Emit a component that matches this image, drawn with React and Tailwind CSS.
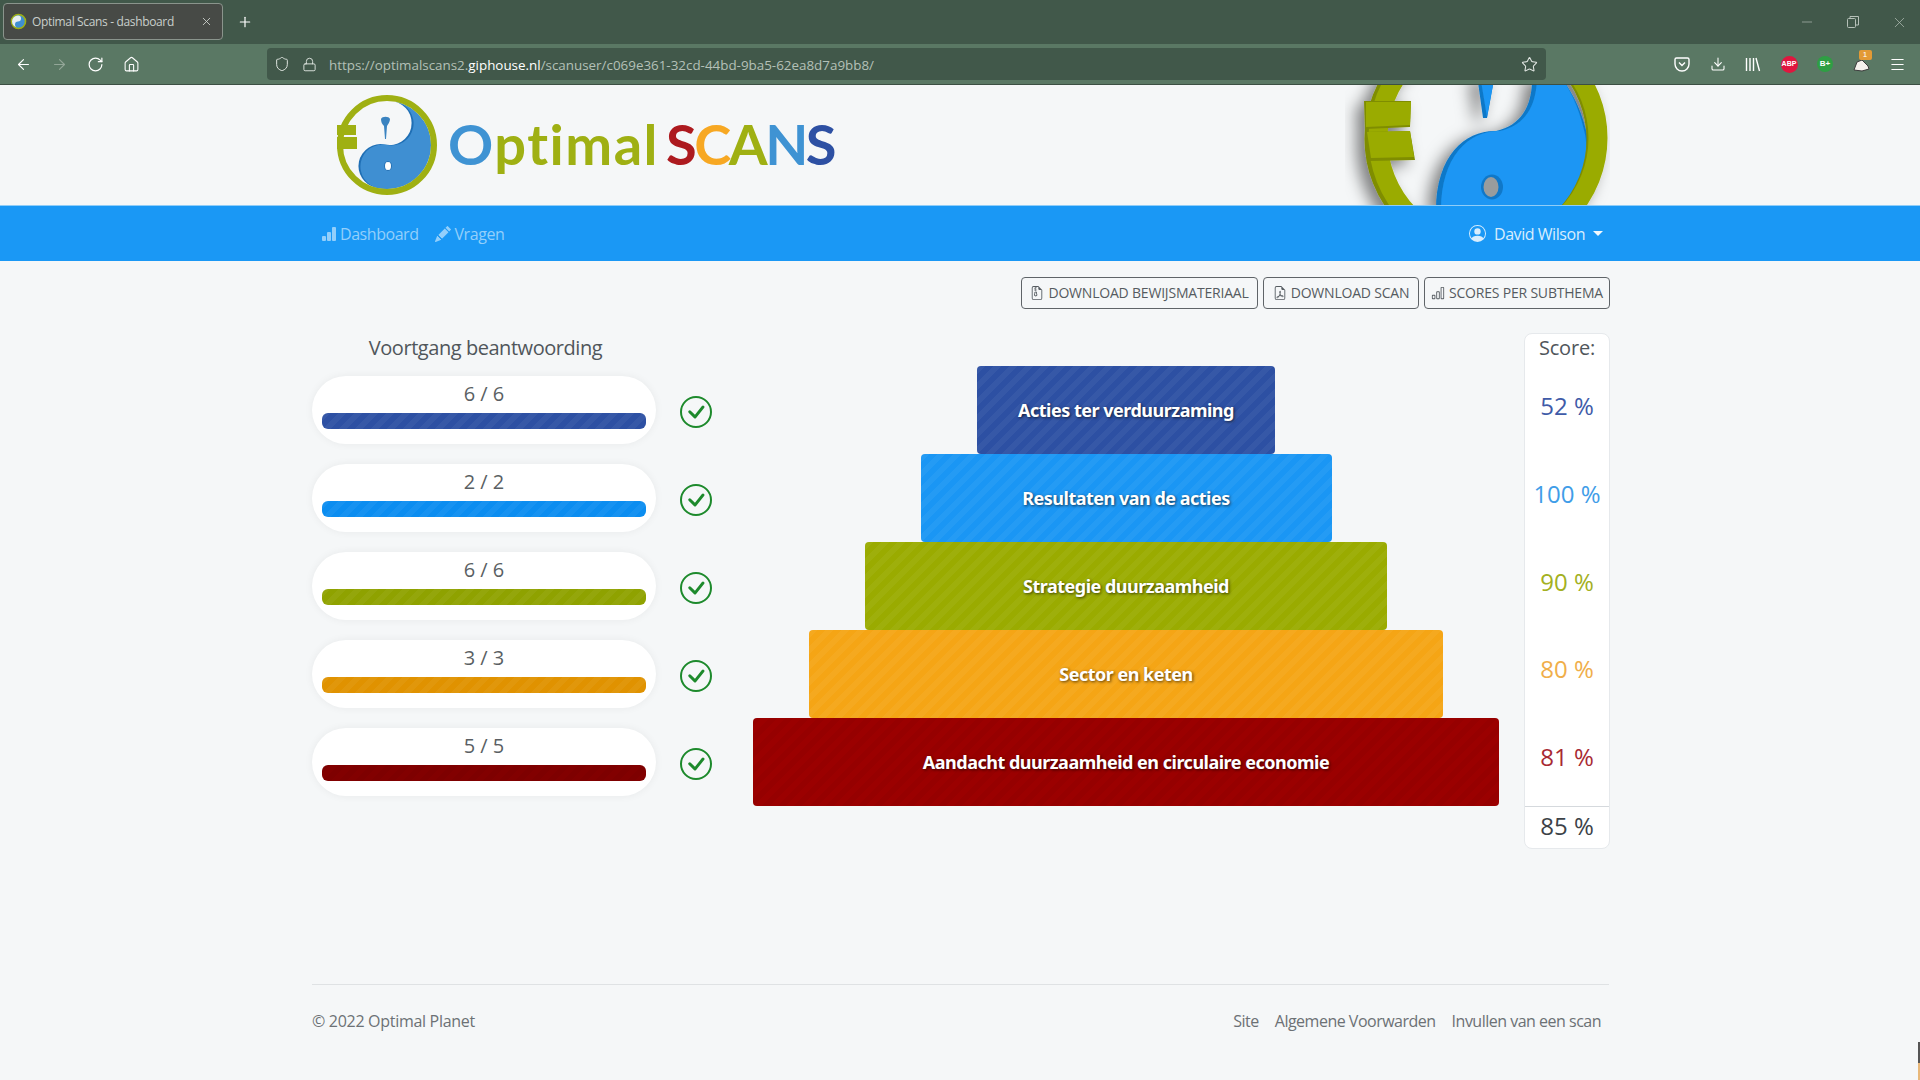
import React from "react";
import { ArrowLeft, ArrowRight, RotateCw, Home, Shield, Lock, Star, Download, Menu, X, Minus, Plus } from "lucide-react";
import { BsBarChartFill, BsPencilFill, BsPersonCircle, BsFileEarmarkZip, BsFileEarmarkPdf, BsBarChart, BsCheckCircle } from "react-icons/bs";

const stripe = "bg-[linear-gradient(135deg,rgba(255,255,255,0.045)_25%,transparent_25%,transparent_50%,rgba(255,255,255,0.045)_50%,rgba(255,255,255,0.045)_75%,transparent_75%,transparent)] bg-[length:16px_16px]";
const faint = "bg-[linear-gradient(135deg,rgba(0,0,0,0.03)_25%,transparent_25%,transparent_50%,rgba(0,0,0,0.03)_50%,rgba(0,0,0,0.03)_75%,transparent_75%,transparent)] bg-[length:16px_16px]";

const rows = [
  { count: "6 / 6", bar: "bg-[#2d50a3] " + stripe, block: "bg-[#2d50a3] w-[298px] " + stripe, label: "Acties ter verduurzaming", score: "52 %", text: "text-[#3f5ba8]" },
  { count: "2 / 2", bar: "bg-[#0b8df0] " + stripe, block: "bg-[#1a96f4] w-[411px] " + stripe, label: "Resultaten van de acties", score: "100 %", text: "text-[#3f9de8]" },
  { count: "6 / 6", bar: "bg-[#8fa200] " + stripe, block: "bg-[#9aab00] w-[522px] " + stripe, label: "Strategie duurzaamheid", score: "90 %", text: "text-[#a3b022]" },
  { count: "3 / 3", bar: "bg-[#e09200] " + stripe, block: "bg-[#f5a515] w-[634px] " + stripe, label: "Sector en keten", score: "80 %", text: "text-[#f0ae4a]" },
  { count: "5 / 5", bar: "bg-[#820000] " + faint, block: "bg-[#9b0000] w-[746px] " + faint, label: "Aandacht duurzaamheid en circulaire economie", score: "81 %", text: "text-[#a82a33]" },
];

function SmallLogo() {
  return (
    <svg width="106" height="104" viewBox="0 0 106 104" className="shrink-0">
      <g transform="translate(53 52)">
        <g transform="rotate(12)">
          <path d="M0 -44 A44 44 0 0 1 0 44 A22 22 0 0 1 0 0 A22 22 0 0 0 0 -44 Z" fill="#1f6fb5" transform="translate(-2 0)" />
          <path d="M0 -44 A44 44 0 0 1 0 44 A22 22 0 0 1 0 0 A22 22 0 0 0 0 -44 Z" fill="#3f8fd2" />
        </g>
        <ellipse cx="1" cy="21" rx="3.5" ry="4.5" fill="#fff" stroke="#1f6fb5" strokeWidth="1" />
        <path d="M-6 -26 C-5 -29 2 -29 3 -26 C3 -23 1 -21 0 -19 L-1 -6 L-2 -6 L-3 -19 C-5 -21 -6 -23 -6 -26 Z" fill="#3a83c0" />
        <circle cx="0" cy="0" r="47" fill="none" stroke="#9fb013" strokeWidth="6" />
        <rect x="-50" y="-20" width="19" height="10" fill="#9fb013" />
        <rect x="-50" y="-8" width="20" height="12" fill="#9fb013" />
      </g>
    </svg>
  );
}

function BigLogo() {
  return (
    <svg width="265" height="120" viewBox="1345 85 265 120" className="shrink-0">
      <defs>
        <filter id="sh" x="-20%" y="-20%" width="140%" height="140%">
          <feDropShadow dx="-8" dy="5" stdDeviation="8" floodColor="#000" floodOpacity="0.5" />
        </filter>
      </defs>
      <g filter="url(#sh)">
        <path d="M1532 75 C1533 105 1522 125 1496 131 C1466 130 1436 155 1436 210 L1574 210 C1586 185 1592 150 1586 130 C1580 105 1570 90 1560 75 Z" fill="#1078c8" />
        <path d="M1537 75 C1537 105 1526 125 1500 131 C1470 130 1441 155 1441 210 L1572 210 C1584 185 1590 150 1584 130 C1578 105 1570 90 1560 75 Z" fill="#1a96f4" />
        <path d="M1477 75 L1495 75 L1493 85 L1487 118 L1483 118 Z" fill="#1078c8" />
        <path d="M1480 75 L1495 75 L1493 85 L1487 117 Z" fill="#1a96f4" />
        <circle cx="1485" cy="139" r="111" fill="none" stroke="#7f8d00" strokeWidth="19" />
        <circle cx="1488" cy="138" r="110" fill="none" stroke="#9aab00" strokeWidth="19" />
        <path d="M1364 101 L1411 101 L1410 127 L1365 129 Z" fill="#7f8d00" />
        <path d="M1366 102 L1411 102 L1410 125 L1366 127 Z" fill="#9aab00" />
        <path d="M1365 132 L1410 131 L1415 160 L1370 161 Z" fill="#7f8d00" />
        <path d="M1367 132 L1410 131 L1414 157 L1371 158 Z" fill="#9aab00" />
      </g>
      <ellipse cx="1492" cy="187" rx="11" ry="12.5" fill="#1078c8" />
      <ellipse cx="1491" cy="187" rx="7.5" ry="10" fill="#999c9d" />
    </svg>
  );
}

function TabBar() {
  return (
    <div className="h-[44px] bg-[#41584a] flex items-center pl-[3px] text-white">
      <div className="w-[220px] h-[37px] mt-[-2px] rounded-[4px] border border-[#8a948c] bg-[#474a46] flex items-center pl-[6px] pr-[9px]">
        <svg width="17" height="17" viewBox="0 0 17 17" className="shrink-0">
          <circle cx="8.5" cy="8.5" r="7" fill="#3f8fd2" stroke="#9fb013" strokeWidth="1.6" />
          <path d="M8 2.5 A3 3 0 0 1 8 8.5 A3 3 0 0 0 8 14.5 A6 6 0 0 1 8 2.5 Z" fill="#e8eef0" />
        </svg>
        <span className="ml-[5px] pt-[2px] flex-1 text-[12px] text-[#c9cfcb] tracking-[-0.35px] whitespace-nowrap">Optimal Scans - dashboard</span>
        <X size={13} strokeWidth={1.5} className="text-[#d8dcd8]" />
      </div>
      <Plus size={16} strokeWidth={1.8} className="ml-[14px]" />
      <div className="flex-1" />
      <div className="flex items-center gap-[31px] pr-[12px] text-[#b5c0b8]">
        <Minus size={16} strokeWidth={1} />
        <svg width="14" height="14" viewBox="0 0 14 14" fill="none" stroke="currentColor"><rect x="1.5" y="3.5" width="8" height="9" rx="1" /><path d="M4 3V1.5h8.5V10H10" /></svg>
        <X size={17} strokeWidth={1} />
      </div>
    </div>
  );
}

function Toolbar() {
  return (
    <div className="h-[41px] bg-[#5a7864] border-b border-[#3c4f43] flex items-center text-white">
      <div className="w-[267px] flex items-center pl-[15px] pt-[1px] gap-[19px] shrink-0">
        <ArrowLeft size={17} strokeWidth={1.6} />
        <ArrowRight size={17} strokeWidth={1.6} className="text-[#93a698]" />
        <RotateCw size={17} strokeWidth={1.7} />
        <Home size={17} strokeWidth={1.5} />
      </div>
      <div className="w-[1279px] h-[32px] rounded-[4px] bg-[#41584a] flex items-center pl-[7px] pr-[8px] shrink-0">
        <Shield size={16} strokeWidth={1.5} className="text-[#dfe5e0]" />
        <Lock size={15} strokeWidth={1.5} className="ml-[12px] text-[#dfe5e0]" />
        <span className="ml-[12px] pt-[2px] flex-1 text-[13.4px] text-[#b4c0b7] whitespace-nowrap">https://optimalscans2.<span className="text-white">giphouse.nl</span>/scanuser/c069e361-32cd-44bd-9ba5-62ea8d7a9bb8/</span>
        <Star size={17} strokeWidth={1.5} className="text-[#e3e8e4]" />
      </div>
      <div className="flex-1 flex items-center justify-between pl-[128px] pr-[14px]">
        <svg width="16" height="15" viewBox="0 0 16 15" fill="none" stroke="#fff" strokeWidth="1.4"><path d="M1 2.5A1.5 1.5 0 0 1 2.5 1h11A1.5 1.5 0 0 1 15 2.5V7a7 7 0 0 1-14 0Z" /><path d="M5 5.5l3 3 3-3" /></svg>
        <Download size={16} strokeWidth={1.6} />
        <svg width="16" height="15" viewBox="0 0 16 15" fill="none" stroke="#fff" strokeWidth="1.4"><path d="M1.5 1v13M5 1v13M8.5 1v13M11 1l3.5 13" /></svg>
        <span className="w-[17px] h-[17px] rounded-full bg-[#e0163f] flex items-center justify-center text-[7px] font-bold text-white font-['Liberation_Sans',sans-serif]">ABP</span>
        <span className="w-[16px] h-[16px] rounded-full bg-[#2f9e44] flex items-center justify-center text-[8px] font-bold text-white font-['Liberation_Sans',sans-serif]">B+</span>
        <span className="relative w-[17px] h-[16px]">
          <svg width="17" height="16" viewBox="0 0 17 16"><path d="M1 14 L4 6 L9 4 L15 10 L16 13 L9 15Z" fill="#f4f1ec" stroke="#3b3b3b" /></svg>
          <span className="absolute right-[-2px] top-[-6px] w-[13px] h-[10px] rounded-[2px] bg-[#e39a35] text-[8px] leading-[10px] text-center text-white font-['Liberation_Sans',sans-serif]">1</span>
        </span>
        <Menu size={17} strokeWidth={1.5} />
      </div>
    </div>
  );
}

function Header() {
  return (
    <div className="h-[120px] overflow-hidden">
      <div className="w-[1320px] mx-auto pl-[34px] pr-[10px] h-full flex items-center justify-between">
        <div className="flex items-center h-full">
          <SmallLogo />
          <span className="ml-[8px] mt-[-2px] text-[56px] leading-none font-bold whitespace-nowrap font-['Lato',sans-serif]">
            <span className="text-[#3f93d3] tracking-[1.5px]">O</span><span className="text-[#9fb013] tracking-[1.5px]">ptimal</span>
            <span className="text-[#ad1a1f] ml-[7px] tracking-[-2.5px]">S</span><span className="text-[#f7a823] tracking-[-2.5px]">C</span><span className="text-[#9fb013] tracking-[-2.5px]">A</span><span className="text-[#3f93d3] tracking-[-2.5px]">N</span><span className="text-[#2d50a3]">S</span>
          </span>
        </div>
        <BigLogo />
      </div>
    </div>
  );
}

function Nav() {
  return (
    <div className="h-[56px] bg-[#1a98f5] border-t border-[#8fcdf8]">
      <div className="w-[1320px] mx-auto h-full px-[21px] flex items-center text-[16px] tracking-[-0.45px]">
        <span className="flex items-center text-[#93cffb]"><BsBarChartFill size={16} /><span className="ml-[3px]">Dashboard</span></span>
        <span className="flex items-center text-[#93cffb] ml-[16px]"><BsPencilFill size={16} /><span className="ml-[4px]">Vragen</span></span>
        <span className="flex-1" />
        <span className="flex items-center text-[#d8edfd] mr-[-4px]">
          <BsPersonCircle size={17} />
          <span className="ml-[8px]">David Wilson</span>
          <span className="ml-[8px] w-0 h-0 border-x-[5px] border-x-transparent border-t-[5px] border-t-[#f2f8fd]" />
        </span>
      </div>
    </div>
  );
}

function Btn({ icon, children, cls }) {
  return (
    <button className={"h-[32px] rounded-[4px] border border-[#5f6468] flex items-center justify-center gap-[4px] text-[14px] tracking-[-0.2px] leading-[28px] text-[#555b60] whitespace-nowrap " + cls}>
      {icon}
      <span>{children}</span>
    </button>
  );
}

export default function App() {
  return (
    <div className="relative h-[1080px] overflow-hidden bg-[#f5f7f8] text-[#50565b] font-['Open_Sans',sans-serif]">
      <TabBar />
      <Toolbar />
      <Header />
      <Nav />
      <main className="w-[1320px] mx-auto px-3">
        <div className="flex justify-end gap-[5px] pt-[16px] mr-[-2px]">
          <Btn cls="w-[237px]" icon={<BsFileEarmarkZip size={14} />}>DOWNLOAD BEWIJSMATERIAAL</Btn>
          <Btn cls="w-[156px]" icon={<BsFileEarmarkPdf size={14} />}>DOWNLOAD SCAN</Btn>
          <Btn cls="w-[186px]" icon={<BsBarChart size={14} />}>SCORES PER SUBTHEMA</Btn>
        </div>
        <div className="flex mt-[24px]">
          <section className="w-[441px] shrink-0">
            <h2 className="w-[344px] h-[43px] flex items-center justify-center text-[20px] tracking-[-0.45px] text-[#50565b] pb-[13px] pl-[3px]">Voortgang beantwoording</h2>
            <div className="flex flex-col gap-[20px]">
              {rows.map((r, i) => (
                <div key={i} className="flex items-center">
                  <div className="w-[344px] h-[68px] rounded-[34px] bg-white shadow-[0_0_8px_rgba(0,0,0,0.06)] px-[10px] pt-[3px] flex flex-col items-center">
                    <span className="text-[20px] leading-[30px] text-[#5a5f63]">{r.count}</span>
                    <div className={"w-full h-[16px] mt-[4px] rounded-[6px] " + r.bar} />
                  </div>
                  <BsCheckCircle size={32} className="ml-[24px] mt-[3px] text-[#1d8a2c]" />
                </div>
              ))}
            </div>
          </section>
          <section className="w-[746px] shrink-0 pt-[33px] flex flex-col items-center">
            {rows.map((r, i) => (
              <div key={i} className={"h-[88px] rounded-[4px] flex items-center justify-center text-white text-[18px] font-bold tracking-[-0.5px] [text-shadow:1px_1px_3px_rgba(0,0,0,0.65)] font-['Noto_Sans',sans-serif] " + r.block}>
                {r.label}
              </div>
            ))}
          </section>
          <aside className="ml-[25px] w-[86px] h-[516px] shrink-0 rounded-[8px] bg-white border border-[#e6e9ec] flex flex-col items-center">
            <div className="h-[28px] flex items-center text-[20px] tracking-[-0.2px] text-[#50565b]">Score:</div>
            {rows.map((r, i) => (
              <div key={i} className={"h-[88px] flex items-center text-[24px] whitespace-nowrap " + r.text}>{r.score}</div>
            ))}
            <div className="mt-[5px] w-full h-[42px] border-t border-[#d5d9dd] flex items-center justify-center text-[24px] text-[#3c4248] pb-[4px]">85 %</div>
          </aside>
        </div>
        <footer className="mt-[135px] w-[1297px] border-t border-[#dfe2e4] h-[76px] flex items-center justify-between text-[16px] text-[#6c7175] pb-[3px]">
          <span className="tracking-[-0.3px]">© 2022 Optimal Planet</span>
          <nav className="flex gap-[16px] pr-[8px] tracking-[-0.5px]">
            <span>Site</span>
            <span>Algemene Voorwarden</span>
            <span>Invullen van een scan</span>
          </nav>
        </footer>
      </main>
      <div className="absolute right-0 top-[1042px] w-[2px] h-[38px] bg-[linear-gradient(#555_55%,#e8b87a_55%)]" />
    </div>
  );
}
